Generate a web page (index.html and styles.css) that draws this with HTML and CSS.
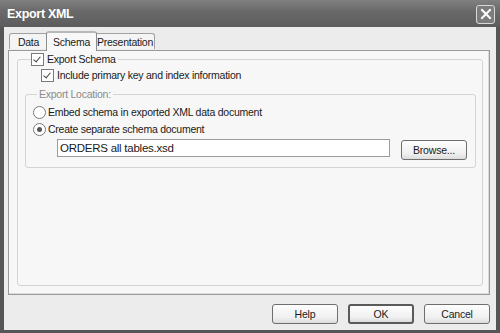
FILE: index.html
```html
<!DOCTYPE html>
<html lang="en">
<head>
<meta charset="UTF-8">
<title>Export XML</title>
<link rel="stylesheet" href="styles.css">
</head>
<body>
<div class="window">
  <div class="titlebar">
    <span class="title">Export XML</span>
    <span class="close">
      <svg width="12" height="12" viewBox="0 0 12 12"><path d="M2 2 L10 10 M10 2 L2 10" stroke="#fff" stroke-width="2" stroke-linecap="square"/></svg>
    </span>
  </div>
  <div class="body">
    <div class="tabs">
      <div class="tab tab-data">Data</div>
      <div class="tab tab-schema active">Schema</div>
      <div class="tab tab-pres">Presentation</div>
    </div>
    <div class="panel">
      <fieldset class="group schema">
        <legend>
          <label class="check"><span class="box checked"></span>Export Schema</label>
        </legend>
        <label class="check sub"><span class="box checked"></span>Include primary key and index information</label>
        <fieldset class="group location">
          <legend class="caption">Export Location:</legend>
          <label class="radio"><span class="dot"></span>Embed schema in exported XML data document</label>
          <label class="radio"><span class="dot on"></span>Create separate schema document</label>
          <div class="file-row">
            <div class="field">ORDERS all tables.xsd</div>
            <button class="btn browse">Browse...</button>
          </div>
        </fieldset>
      </fieldset>
    </div>
    <div class="buttons">
      <button class="btn">Help</button>
      <button class="btn default">OK</button>
      <button class="btn">Cancel</button>
    </div>
  </div>
</div>
</body>
</html>
```

FILE: styles.css
```css
body {
  margin: 0;
  font-family: "Liberation Sans", Arial, sans-serif;
  font-size: 10.5px;
  letter-spacing: -0.25px;
  color: #1a1a1a;
}
.window {
  width: 500px;
  height: 333px;
  box-sizing: border-box;
  background: #565656;
  padding: 0 4px 3px 4px;
  display: flex;
  flex-direction: column;
}
.titlebar {
  height: 27px;
  margin: 0 -4px;
  padding: 0 5px 0 7px;
  background: linear-gradient(#808080, #6a6a6a 40%, #5c5c5c);
  display: flex;
  align-items: center;
  justify-content: space-between;
}
.title {
  color: #fff;
  font-weight: bold;
  font-size: 12.5px;
  letter-spacing: -0.3px;
}
.close {
  width: 17px;
  height: 17px;
  border: 1px solid #d8d8d8;
  border-radius: 3px;
  background: #7c7c7c;
  display: flex;
  align-items: center;
  justify-content: center;
  margin-top: 1px;
}
.body {
  flex: 1;
  background: #ececec;
  padding: 4px 6px 0 4px;
  display: flex;
  flex-direction: column;
}
.tabs {
  display: flex;
  align-items: flex-end;
  height: 19px;
  padding-left: 1px;
}
.tab {
  box-sizing: border-box;
  height: 16px;
  line-height: 16px;
  text-align: center;
  border: 1px solid #a0a0a0;
  border-bottom: none;
  border-radius: 3px 3px 0 0;
  background: #f4f4f4;
  margin-bottom: 1px;
}
.tab-data {
  width: 39px;
}
.tab-schema {
  width: 51px;
}
.tab-pres {
  width: 60px;
}
.tab.active {
  height: 20px;
  line-height: 18px;
  background: #f8f8f8;
  border-color: #8c8c8c;
  border-top: 2px solid #b8b8b8;
  margin: 0 -2px -1px;
  position: relative;
  z-index: 1;
}
.panel {
  flex: 1;
  border: 1px solid #9a9a9a;
  background: #f7f7f7;
  padding: 0 6px 8px 8px;
  display: flex;
  flex-direction: column;
  box-shadow: inset -1px -1px 0 #dcdcdc;
}
.group {
  margin: 0;
  border: 1px solid #d4d4d4;
  border-radius: 3px;
  min-width: 0;
}
.schema {
  flex: 1;
  padding: 0 6px 0 7px;
}
.schema > legend {
  padding: 0 2px 0 0;
  margin-left: 6px;
}
.check, .radio {
  display: flex;
  align-items: center;
  height: 16px;
}
.box {
  width: 11px;
  height: 11px;
  border: 1px solid #7a7a7a;
  background: #fff;
  margin-right: 3px;
  position: relative;
}
.box.checked::after {
  content: "";
  position: absolute;
  left: 3px;
  top: 1px;
  width: 3px;
  height: 6px;
  border: solid #444;
  border-width: 0 1.5px 1.5px 0;
  transform: rotate(40deg);
}
.sub {
  margin-left: 16px;
}
.location {
  margin-top: 3px;
  padding: 2px 6px 7px 7px;
}
.caption {
  color: #8a8a8a;
  height: 16px;
  line-height: 16px;
  padding: 0 2px;
  margin-left: 4px;
}
.dot {
  width: 11px;
  height: 11px;
  border: 1px solid #7a7a7a;
  border-radius: 50%;
  background: #fff;
  margin-right: 2px;
  position: relative;
}
.dot.on::after {
  content: "";
  position: absolute;
  left: 3px;
  top: 3px;
  width: 5px;
  height: 5px;
  border-radius: 50%;
  background: #555;
}
.radio + .radio {
  margin-top: 1px;
}
.file-row {
  display: flex;
  align-items: flex-start;
  margin-top: 2px;
  padding-left: 24px;
}
.field {
  width: 333px;
  height: 18px;
  box-sizing: border-box;
  border: 1px solid #9c9c9c;
  background: #fff;
  line-height: 16px;
  padding-left: 2px;
  font-size: 11.5px;
}
.btn {
  font-family: "Liberation Sans", Arial, sans-serif;
  font-size: 10.5px;
  letter-spacing: -0.2px;
  color: #1a1a1a;
  width: 66px;
  height: 20px;
  padding: 0;
  border: 1px solid #6e6e6e;
  border-radius: 3px;
  background: linear-gradient(#fdfdfd, #f0f0f0 70%, #dcdcdc);
}
.browse {
  margin-left: 11px;
  margin-top: 1px;
}
.buttons {
  display: flex;
  justify-content: flex-end;
  gap: 10px;
  margin: 9px 0 6px;
}
.btn.default {
  border: 2px solid #5a5a5a;
}
```
